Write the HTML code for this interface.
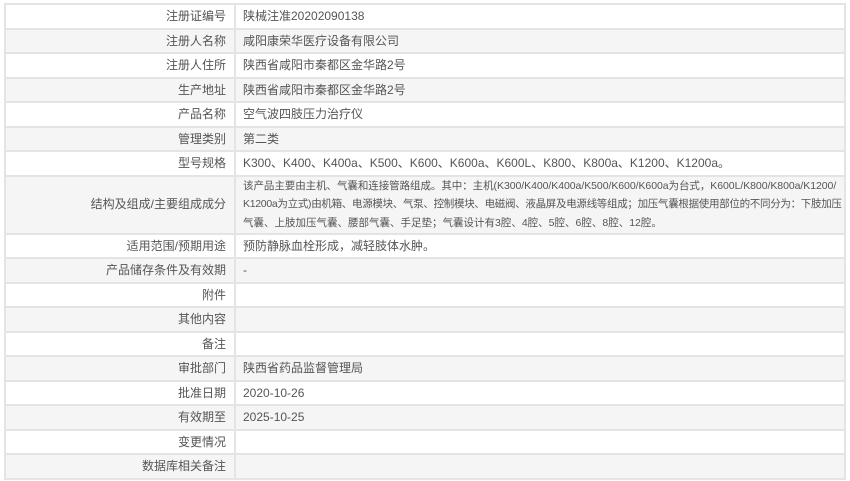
<!DOCTYPE html>
<html><head><meta charset="utf-8"><style>
html,body{margin:0;padding:0;background:#fff;}
body{width:850px;height:481px;overflow:hidden;font-family:"Liberation Sans","Noto Sans CJK SC",sans-serif;font-size:12px;color:#555;}
table{position:absolute;left:4px;top:3px;width:842px;border-collapse:collapse;table-layout:fixed;}
td{border:2px solid #e4e4e4;padding:0 8px;height:22.5px;line-height:16px;white-space:nowrap;overflow:hidden;}
td.l{width:212px;text-align:right;}
td.v{padding-left:7px;}
tr:nth-child(even) td{background:#f5f5f5;}
tr.big td{height:56px;line-height:18.5px;}
tr.big td.v{font-size:10.5px;}
.b{display:block;white-space:nowrap;}
</style></head><body>
<table>
<tr><td class="l">注册证编号</td><td class="v">陕械注准20202090138</td></tr>
<tr><td class="l">注册人名称</td><td class="v">咸阳康荣华医疗设备有限公司</td></tr>
<tr><td class="l">注册人住所</td><td class="v">陕西省咸阳市秦都区金华路2号</td></tr>
<tr><td class="l">生产地址</td><td class="v">陕西省咸阳市秦都区金华路2号</td></tr>
<tr><td class="l">产品名称</td><td class="v">空气波四肢压力治疗仪</td></tr>
<tr><td class="l">管理类别</td><td class="v">第二类</td></tr>
<tr><td class="l">型号规格</td><td class="v">K300、K400、K400a、K500、K600、K600a、K600L、K800、K800a、K1200、K1200a。</td></tr>
<tr class="big"><td class="l">结构及组成/主要组成成分</td><td class="v"><span class="b" style="letter-spacing:-0.06px">该产品主要由主机、气囊和连接管路组成。其中：主机(K300/K400/K400a/K500/K600/K600a为台式，K600L/K800/K800a/K1200/</span><span class="b" style="letter-spacing:-0.3px">K1200a为立式)由机箱、电源模块、气泵、控制模块、电磁阀、液晶屏及电源线等组成；加压气囊根据使用部位的不同分为：下肢加压</span><span class="b">气囊、上肢加压气囊、腰部气囊、手足垫；气囊设计有3腔、4腔、5腔、6腔、8腔、12腔。</span></td></tr>
<tr><td class="l">适用范围/预期用途</td><td class="v">预防静脉血栓形成，减轻肢体水肿。</td></tr>
<tr><td class="l">产品储存条件及有效期</td><td class="v">-</td></tr>
<tr><td class="l">附件</td><td class="v"></td></tr>
<tr><td class="l">其他内容</td><td class="v"></td></tr>
<tr><td class="l">备注</td><td class="v"></td></tr>
<tr><td class="l">审批部门</td><td class="v">陕西省药品监督管理局</td></tr>
<tr><td class="l">批准日期</td><td class="v">2020-10-26</td></tr>
<tr><td class="l">有效期至</td><td class="v">2025-10-25</td></tr>
<tr><td class="l">变更情况</td><td class="v"></td></tr>
<tr><td class="l">数据库相关备注</td><td class="v"></td></tr>
</table>
</body></html>
